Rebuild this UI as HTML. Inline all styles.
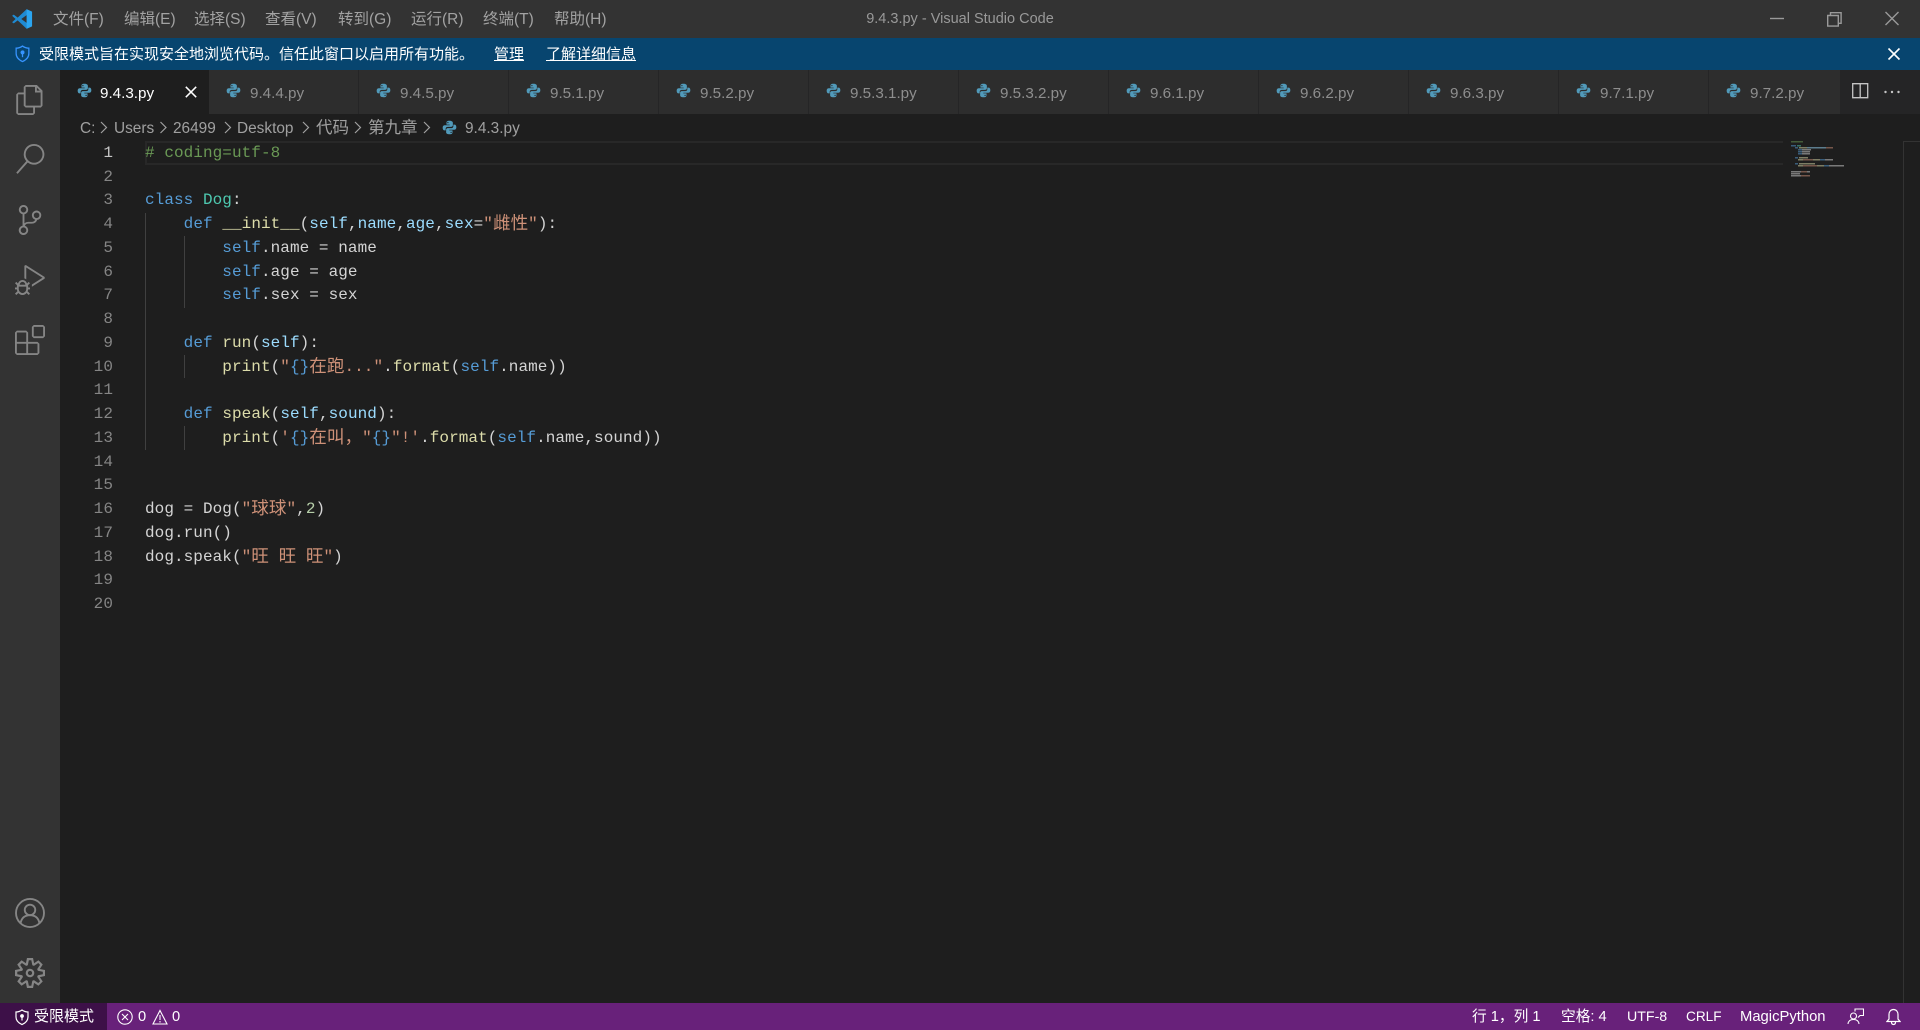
<!DOCTYPE html>
<html lang="zh"><head><meta charset="utf-8"><title>9.4.3.py - Visual Studio Code</title>
<style>
*{box-sizing:border-box;margin:0;padding:0}
html,body{width:1920px;height:1030px;overflow:hidden;background:#1e1e1e}
body{position:relative;font-family:"Liberation Sans","Noto Sans CJK SC",sans-serif;color:#ccc}
.a{position:absolute;white-space:pre}
.bar{position:absolute;left:0;width:1920px}
#title{top:0;height:38px;background:#333}
#banner{top:38px;height:32px;background:#07456f}
#activity{position:absolute;left:0;top:70px;width:60px;height:933px;background:#333}
#tabs{position:absolute;left:60px;top:70px;width:1860px;height:44px;background:#252526}
#status{top:1003px;height:27px;background:#68217a}
.m{top:1px;height:38px;line-height:38px;font-size:15.5px;color:#a2a2a2}
.bt{top:39px;height:32px;line-height:32px;font-size:15px;color:#fff}
.tab{position:absolute;top:0;height:44px;width:150px;background:#2d2d2d;border-right:1px solid #252526;font-size:15.2px;line-height:44px;color:#8e8e8e;overflow:hidden}
.tab svg{position:absolute;left:17px;top:13px}
.tab span{position:absolute;left:41px;top:2px}
.bc{top:115px;height:26px;line-height:27px;font-size:15.4px;color:#a0a0a0}
.code{font-family:"Liberation Mono","Noto Sans CJK SC",monospace;font-size:16px;letter-spacing:.06px;line-height:23.75px;height:23.75px;color:#d4d4d4;left:145px}
.code i{font-style:normal;font-size:17.6px;letter-spacing:0;line-height:0;position:relative;top:1px;font-family:"Noto Sans CJK SC",sans-serif;color:#ce9178}
.n{font-family:"Liberation Mono",monospace;font-size:16px;letter-spacing:.06px;line-height:23.75px;height:23.75px;color:#858585;left:72px;width:41px;text-align:right}
.k{color:#569cd6}.t{color:#4ec9b0}.f{color:#dcdcaa}.v{color:#9cdcfe}.s{color:#ce9178}.g{color:#6a9955}.u{color:#b5cea8}
.guide{position:absolute;width:1px;background:#404040}
.st{top:1003px;height:27px;line-height:28px;font-size:14.7px;color:#fff}
</style></head><body>

<div class="bar" id="title"></div>
<svg class="a" style="left:11px;top:8px" width="22" height="22" viewBox="0 0 24 24"><path fill="#1f8ad2" d="M1.2 8.4 3 7.2l4.3 3.3L17 1.3l.6 6L11.2 12l6.4 4.7-.6 6-9.7-9.2L3 16.800l-1.8-1.2L5 12z"/><path fill="#2ba5f0" d="M17 1.2 23 4v16l-6 2.8z"/></svg>
<div class="a m" style="left:53px">文件(F)</div>
<div class="a m" style="left:124px">编辑(E)</div>
<div class="a m" style="left:194px">选择(S)</div>
<div class="a m" style="left:265px">查看(V)</div>
<div class="a m" style="left:338px">转到(G)</div>
<div class="a m" style="left:411px">运行(R)</div>
<div class="a m" style="left:483px">终端(T)</div>
<div class="a m" style="left:554px">帮助(H)</div>
<div class="a m" style="left:866px;width:188px;text-align:center;color:#999;font-size:14.5px;top:0">9.4.3.py - Visual Studio Code</div>
<svg class="a" style="left:1768px;top:8px" width="140" height="22" viewBox="0 0 140 22" fill="none" stroke="#9a9a9a" stroke-width="1.4"><path d="M2 10.5h14"/><path d="M59.7 7.5h10.6v10.6H59.7zM62.5 7.5V4.7h10.6v10.6h-2.8"/><path d="M117.5 4l13 13M130.5 4l-13 13"/></svg>

<div class="bar" id="banner"></div>
<svg class="a" style="left:14px;top:45px" width="17" height="18" viewBox="0 0 16 17" fill="none" stroke="#3794ff" stroke-width="1.2"><path d="M8 1c2 1.4 4 2 6 2v5c0 3.5-2.5 6-6 7.6C4.500 14 2 11.500 2 8V3c2 0 4-.6 6-2z"/><circle cx="8" cy="7" r="1.300" fill="#3794ff"/><path d="M8 8v3.500"/></svg>
<div class="a bt" style="left:39px">受限模式旨在实现安全地浏览代码。信任此窗口以启用所有功能。</div>
<div class="a bt" style="left:494px;text-decoration:underline">管理</div>
<div class="a bt" style="left:546px;text-decoration:underline">了解详细信息</div>
<svg class="a" style="left:1887px;top:47px" width="14" height="14" viewBox="0 0 14 14" stroke="#fff" stroke-width="1.6"><path d="M1.500 1.500l11 11M12.500 1.500l-11 11"/></svg>

<div id="activity"></div>
<svg class="a" style="left:15px;top:85px" width="30" height="30" viewBox="0 0 24 24" fill="#858585"><path d="M17.500 0h-9L7 1.500V6H2.500L1 7.500v15.070L2.500 24h12.070L16 22.570V18h4.700l1.300-1.430V4.500L17.500 0zm0 2.120l2.380 2.380H17.500V2.120zm-3 20.380h-12v-15H7v9.070L8.500 18h6v4.500zm6-6h-12v-15H16V6h4.500v10.500z"/></svg>
<svg class="a" style="left:15px;top:144px" width="30" height="30" viewBox="0 0 24 24" fill="#858585"><path d="M15.250 0a8.250 8.250 0 0 0-6.180 13.720L1 22.880l1.120 1 8.050-9.120A8.251 8.251 0 1 0 15.250.01V0zm0 15a6.750 6.750 0 1 1 0-13.500 6.750 6.750 0 0 1 0 13.500z"/></svg>
<svg class="a" style="left:15px;top:205px" width="30" height="30" viewBox="0 0 24 24" fill="#858585"><path d="M21.007 8.222A3.738 3.738 0 0 0 15.045 5.200a3.737 3.737 0 0 0 1.156 6.583 2.988 2.988 0 0 1-2.668 1.670h-2.990a4.456 4.456 0 0 0-2.989 1.165V7.400a3.737 3.737 0 1 0-1.494 0v9.117a3.776 3.776 0 1 0 1.816.099 2.990 2.990 0 0 1 2.668-1.667h2.990a4.484 4.484 0 0 0 4.223-3.039 3.736 3.736 0 0 0 3.250-3.687zM4.565 3.738a2.242 2.242 0 1 1 4.484 0 2.242 2.242 0 0 1-4.484 0zm4.484 16.441a2.242 2.242 0 1 1-4.484 0 2.242 2.242 0 0 1 4.484 0zm8.221-9.715a2.242 2.242 0 1 1 0-4.485 2.242 2.242 0 0 1 0 4.485z"/></svg>
<svg class="a" style="left:15px;top:265px" width="30" height="30" viewBox="0 0 24 24" fill="#858585"><path d="M10.940 13.500l-1.320 1.320a3.730 3.730 0 0 0-7.240 0L1.060 13.500 0 14.560l1.720 1.720-.22.220V18H0v1.500h1.500v.08c.077.489.214.966.410 1.420L0 22.940 1.060 24l1.650-1.650A4.308 4.308 0 0 0 6 24a4.310 4.310 0 0 0 3.290-1.650L10.940 24 12 22.940 10.090 21c.198-.464.336-.951.410-1.450v-.1H12V18h-1.500v-1.500l-.22-.22L12 14.560l-1.060-1.060zM6 13.500a2.250 2.250 0 0 1 2.250 2.250h-4.500A2.250 2.250 0 0 1 6 13.500zm3 6a3.330 3.330 0 0 1-3 3 3.330 3.330 0 0 1-3-3v-2.250h6v2.250zm14.760-9.900v1.260L13.500 17.370v-1.770l8.500-5.370L9 2v9.460a5.070 5.070 0 0 0-1.500-.72V.63L8.640 0l15.120 9.600z"/></svg>
<svg class="a" style="left:15px;top:325px" width="30" height="30" viewBox="0 0 24 24" fill="#858585"><path d="M13.500 1.500L15 0h7.500L24 1.500V9l-1.500 1.500H15L13.500 9V1.500zm1.500 0V9h7.500V1.500H15zM0 15V6l1.500-1.500H9L10.500 6v7.500H18l1.500 1.500v7.500L18 24H1.500L0 22.500V15zm9-1.500V6H1.500v7.500H9zM9 15H1.500v7.500H9V15zm1.500 7.500H18V15h-7.500v7.500z"/></svg>
<svg class="a" style="left:15px;top:898px" width="30" height="30" viewBox="0 0 24 24" fill="none" stroke="#858585" stroke-width="1.500"><circle cx="12" cy="12" r="11.200"/><circle cx="12" cy="9.500" r="4.200"/><path d="M4.500 20c.8-4 3.500-6.200 7.500-6.200s6.700 2.200 7.500 6.200"/></svg>
<svg class="a" style="left:15px;top:958px" width="30" height="30" viewBox="0 0 24 24" fill="#858585"><path d="M19.850 8.750l4.150.830v4.840l-4.150.830 2.350 3.520-3.430 3.430-3.520-2.350-.830 4.150H9.580l-.830-4.150-3.520 2.350-3.430-3.430 2.350-3.520L0 14.420V9.580l4.150-.830L1.800 5.230 5.230 1.800l3.520 2.350L9.580 0h4.840l.830 4.150 3.520-2.350 3.430 3.430-2.350 3.520zm-1.570 5.070l4-.810v-2l-4-.810-.540-1.300 2.290-3.430-1.430-1.430-3.430 2.290-1.300-.540-.810-4h-2l-.810 4-1.300.540-3.430-2.290-1.430 1.430L6.380 8.900l-.540 1.300-4 .810v2l4 .810.540 1.300-2.290 3.430 1.430 1.430 3.430-2.290 1.300.540.810 4h2l.810-4 1.300-.540 3.430 2.290 1.430-1.430-2.290-3.430.540-1.300zm-8.186-4.672A3.430 3.430 0 0 1 12 8.570 3.440 3.440 0 0 1 15.430 12a3.430 3.430 0 1 1-5.336-2.852zm.956 4.274c.281.188.612.288.950.288A1.700 1.700 0 0 0 13.710 12a1.710 1.710 0 1 0-2.660 1.422z"/></svg>

<div id="tabs">
<svg width="0" height="0" style="position:absolute"><defs><symbol id="py" viewBox="0 0 16 16"><path fill="#519aba" d="M7.900.8C5.300.8 4.800 1.800 4.800 3v1.900h3.400v.7H3C1.600 5.600.7 6.500.7 8.300c0 1.900.9 2.800 2 2.800h1.200V9.500c0-1.300.9-2.200 2.200-2.200h3.700c1 0 1.800-.8 1.800-1.800V3c0-1.300-1.300-2.200-3.700-2.200zM6.300 2.100a.7.7 0 1 1 0 1.400.7.7 0 0 1 0-1.400z"/><path fill="#519aba" d="M8.100 15.200c2.600 0 3.100-1 3.100-2.200v-1.900H7.800v-.7H13c1.400 0 2.300-.9 2.300-2.700 0-1.900-.9-2.800-2-2.800h-1.200v1.600c0 1.300-.9 2.200-2.200 2.200H6.200c-1 0-1.800.8-1.800 1.800V13c0 1.300 1.300 2.200 3.700 2.200zm1.600-1.300a.7.7 0 1 1 0-1.400.7.7 0 0 1 0 1.400z"/></symbol></defs></svg>
<div class="tab" style="left:0;width:149px;background:#1e1e1e;color:#fff;border-right:0"><svg width="15" height="15"><use href="#py"/></svg><span style="left:40px">9.4.3.py</span></div>
<svg class="a" style="left:125px;top:16px" width="12" height="12" viewBox="0 0 12 12" stroke="#fff" stroke-width="1.500"><path d="M.8.8l10.400 10.400M11.200.8L.8 11.200"/></svg>
<div class="tab" style="left:149px"><svg width="15" height="15"><use href="#py"/></svg><span>9.4.4.py</span></div>
<div class="tab" style="left:299px"><svg width="15" height="15"><use href="#py"/></svg><span>9.4.5.py</span></div>
<div class="tab" style="left:449px"><svg width="15" height="15"><use href="#py"/></svg><span>9.5.1.py</span></div>
<div class="tab" style="left:599px"><svg width="15" height="15"><use href="#py"/></svg><span>9.5.2.py</span></div>
<div class="tab" style="left:749px"><svg width="15" height="15"><use href="#py"/></svg><span>9.5.3.1.py</span></div>
<div class="tab" style="left:899px"><svg width="15" height="15"><use href="#py"/></svg><span>9.5.3.2.py</span></div>
<div class="tab" style="left:1049px"><svg width="15" height="15"><use href="#py"/></svg><span>9.6.1.py</span></div>
<div class="tab" style="left:1199px"><svg width="15" height="15"><use href="#py"/></svg><span>9.6.2.py</span></div>
<div class="tab" style="left:1349px"><svg width="15" height="15"><use href="#py"/></svg><span>9.6.3.py</span></div>
<div class="tab" style="left:1499px"><svg width="15" height="15"><use href="#py"/></svg><span>9.7.1.py</span></div>
<div class="tab" style="left:1649px;width:131px;border-right:0"><svg width="15" height="15"><use href="#py"/></svg><span>9.7.2.py</span></div>
</div>
<svg class="a" style="left:1851px;top:82px" width="52" height="18" viewBox="0 0 52 18"><path fill="none" stroke="#c5c5c5" stroke-width="1.300" d="M1.700 1.700h15v14h-15zM9.200 1.700v14"/><circle cx="34.500" cy="10" r="1.200" fill="#c5c5c5"/><circle cx="41" cy="10" r="1.200" fill="#c5c5c5"/><circle cx="47.500" cy="10" r="1.200" fill="#c5c5c5"/></svg>

<div class="a bc" style="left:80px">C:</div>
<div class="a bc" style="left:114px">Users</div>
<div class="a bc" style="left:173px">26499</div>
<div class="a bc" style="left:237px">Desktop</div>
<div class="a bc" style="left:316px;font-size:16.5px">代码</div>
<div class="a bc" style="left:368px;font-size:16.5px">第九章</div>
<div class="a bc" style="left:465px">9.4.3.py</div>
<svg class="a" style="left:0;top:118px" width="440" height="18" viewBox="0 0 440 18" fill="none" stroke="#a0a0a0" stroke-width="1.200"><path d="M101 4l5.500 5.500L101 15M160.500 4l5.500 5.500-5.500 5.500M225 4l5.500 5.500L225 15M303 4l5.500 5.500L303 15M355 4l5.500 5.500-5.500 5.500M424 4l5.500 5.500L424 15"/></svg>
<svg class="a" style="left:442px;top:120px" width="15" height="15"><use href="#py"/></svg>

<!-- current line -->
<div class="a" style="left:145px;top:141px;width:1638px;height:23.500px;border:2px solid #282828;border-right:0"></div>

<!-- indent guides -->
<div class="guide" style="left:145px;top:213px;height:237px"></div>
<div class="guide" style="left:184px;top:236px;height:72px"></div>
<div class="guide" style="left:184px;top:355px;height:23px"></div>
<div class="guide" style="left:184px;top:426px;height:24px"></div>

<!-- line numbers -->
<div class="a n" style="top:141.800px;color:#c6c6c6">1</div>
<div class="a n" style="top:165.550px">2</div>
<div class="a n" style="top:189.300px">3</div>
<div class="a n" style="top:213.050px">4</div>
<div class="a n" style="top:236.800px">5</div>
<div class="a n" style="top:260.550px">6</div>
<div class="a n" style="top:284.300px">7</div>
<div class="a n" style="top:308.050px">8</div>
<div class="a n" style="top:331.800px">9</div>
<div class="a n" style="top:355.550px">10</div>
<div class="a n" style="top:379.300px">11</div>
<div class="a n" style="top:403.050px">12</div>
<div class="a n" style="top:426.800px">13</div>
<div class="a n" style="top:450.550px">14</div>
<div class="a n" style="top:474.300px">15</div>
<div class="a n" style="top:498.050px">16</div>
<div class="a n" style="top:521.800px">17</div>
<div class="a n" style="top:545.550px">18</div>
<div class="a n" style="top:569.300px">19</div>
<div class="a n" style="top:593.050px">20</div>

<!-- code -->
<div class="a code" style="top:141.800px"><span class="g"># coding=utf-8</span></div>
<div class="a code" style="top:189.300px"><span class="k">class</span> <span class="t">Dog</span>:</div>
<div class="a code" style="top:213.050px">    <span class="k">def</span> <span class="f">__init__</span>(<span class="v">self</span>,<span class="v">name</span>,<span class="v">age</span>,<span class="v">sex</span>=<span class="s">"<i>雌性</i>"</span>):</div>
<div class="a code" style="top:236.800px">        <span class="k">self</span>.name = name</div>
<div class="a code" style="top:260.550px">        <span class="k">self</span>.age = age</div>
<div class="a code" style="top:284.300px">        <span class="k">self</span>.sex = sex</div>
<div class="a code" style="top:331.800px">    <span class="k">def</span> <span class="f">run</span>(<span class="v">self</span>):</div>
<div class="a code" style="top:355.550px">        <span class="f">print</span>(<span class="s">"</span><span class="k">{}</span><i>在跑</i><span class="s">..."</span>.<span class="f">format</span>(<span class="k">self</span>.name))</div>
<div class="a code" style="top:403.050px">    <span class="k">def</span> <span class="f">speak</span>(<span class="v">self</span>,<span class="v">sound</span>):</div>
<div class="a code" style="top:426.800px">        <span class="f">print</span>(<span class="s">'</span><span class="k">{}</span><i>在叫，</i><span class="s">"</span><span class="k">{}</span><span class="s">"!'</span>.<span class="f">format</span>(<span class="k">self</span>.name,sound))</div>
<div class="a code" style="top:498.050px">dog = Dog(<span class="s">"<i>球球</i>"</span>,<span class="u">2</span>)</div>
<div class="a code" style="top:521.800px">dog.run()</div>
<div class="a code" style="top:545.550px">dog.speak(<span class="s">"<i>旺</i> <i>旺</i> <i>旺</i>"</span>)</div>

<!-- minimap -->
<svg class="a" style="left:1788px;top:140px" width="62" height="40" viewBox="0 0 62 40" shape-rendering="crispEdges">
<g opacity=".5">
<rect x="3" y="1" width="12" height="1.500" fill="#6a9955"/>
<rect x="3" y="5" width="5" height="1.500" fill="#569cd6"/><rect x="9" y="5" width="4" height="1.500" fill="#4ec9b0"/>
<rect x="7" y="7" width="3" height="1.500" fill="#569cd6"/><rect x="11" y="7" width="8" height="1.500" fill="#dcdcaa"/><rect x="19" y="7" width="19" height="1.500" fill="#9cdcfe"/><rect x="38" y="7" width="7" height="1.500" fill="#ce9178"/>
<rect x="10" y="9" width="4" height="1.500" fill="#569cd6"/><rect x="14" y="9" width="9" height="1.500" fill="#d4d4d4"/>
<rect x="10" y="11" width="4" height="1.500" fill="#569cd6"/><rect x="14" y="11" width="8" height="1.500" fill="#d4d4d4"/>
<rect x="10" y="13" width="4" height="1.500" fill="#569cd6"/><rect x="14" y="13" width="8" height="1.500" fill="#d4d4d4"/>
<rect x="7" y="17" width="3" height="1.500" fill="#569cd6"/><rect x="11" y="17" width="9" height="1.500" fill="#dcdcaa"/>
<rect x="10" y="19" width="5" height="1.500" fill="#dcdcaa"/><rect x="15" y="19" width="10" height="1.500" fill="#ce9178"/><rect x="25" y="19" width="7" height="1.500" fill="#dcdcaa"/><rect x="32" y="19" width="5" height="1.500" fill="#569cd6"/><rect x="37" y="19" width="8" height="1.500" fill="#d4d4d4"/>
<rect x="7" y="23" width="3" height="1.500" fill="#569cd6"/><rect x="11" y="23" width="16" height="1.500" fill="#dcdcaa"/>
<rect x="10" y="25" width="5" height="1.500" fill="#dcdcaa"/><rect x="15" y="25" width="14" height="1.500" fill="#ce9178"/><rect x="29" y="25" width="7" height="1.500" fill="#dcdcaa"/><rect x="36" y="25" width="5" height="1.500" fill="#569cd6"/><rect x="41" y="25" width="15" height="1.500" fill="#d4d4d4"/>
<rect x="3" y="31" width="10" height="1.500" fill="#d4d4d4"/><rect x="13" y="31" width="6" height="1.500" fill="#ce9178"/><rect x="19" y="31" width="3" height="1.500" fill="#d4d4d4"/>
<rect x="3" y="33" width="9" height="1.500" fill="#d4d4d4"/>
<rect x="3" y="35" width="10" height="1.500" fill="#d4d4d4"/><rect x="13" y="35" width="9" height="1.500" fill="#ce9178"/>
</g></svg>
<!-- overview ruler -->
<div class="a" style="left:1903px;top:141px;width:17px;height:862px;border-left:1px solid #333;border-top:1px solid #333"></div>

<!-- status bar -->
<div class="bar" id="status"></div>
<div class="a" style="left:0;top:1003px;width:107px;height:27px;background:#3d1048"></div>
<svg class="a" style="left:14px;top:1009px" width="16" height="17" viewBox="0 0 16 17" fill="none" stroke="#fff" stroke-width="1.200"><path d="M8 1c2 1.400 4 2 6 2v5c0 3.500-2.500 6-6 7.600C4.500 14 2 11.500 2 8V3c2 0 4-.6 6-2z"/><circle cx="8" cy="7" r="1.300" fill="#fff"/><path d="M8 8v3.500"/></svg>
<div class="a st" style="left:34px;font-size:15px">受限模式</div>
<svg class="a" style="left:117px;top:1009px" width="16" height="16" viewBox="0 0 16 16" fill="none" stroke="#fff" stroke-width="1.100"><circle cx="8" cy="8" r="7.200"/><path d="M5 5l6 6M11 5l-6 6"/></svg>
<div class="a st" style="left:138px">0</div>
<svg class="a" style="left:152px;top:1009px" width="16" height="16" viewBox="0 0 16 16" fill="none" stroke="#fff" stroke-width="1.100"><path d="M8 1.500L15 15H1z"/><path d="M8 6v5M8 12v1.500"/></svg>
<div class="a st" style="left:172px">0</div>
<div class="a st" style="left:1472px">行 1，列 1</div>
<div class="a st" style="left:1561px">空格: 4</div>
<div class="a st" style="left:1627px;font-size:14.2px">UTF-8</div>
<div class="a st" style="left:1686px;font-size:13.6px">CRLF</div>
<div class="a st" style="left:1740px;font-size:14.8px">MagicPython</div>
<svg class="a" style="left:1847px;top:1008px" width="17" height="17" viewBox="0 0 17 17" fill="none" stroke="#fff" stroke-width="1.100"><path d="M8 3.500V1h8.500v6.500H13l-2 2"/><circle cx="6.500" cy="8" r="3"/><path d="M1 16c.3-3 2.500-4.500 5.500-4.500S11.700 13 12 16"/></svg>
<svg class="a" style="left:1886px;top:1008px" width="15" height="18" viewBox="0 0 15 18" fill="none" stroke="#fff" stroke-width="1.200"><path d="M7.500 1.500C4.500 1.500 3 4 3 6.500V11l-2 2.500h13L12 11V6.500c0-2.500-1.500-5-4.500-5z"/><path d="M5.500 14c0 1.500.8 2.500 2 2.500s2-1 2-2.500"/></svg>
</body></html>
